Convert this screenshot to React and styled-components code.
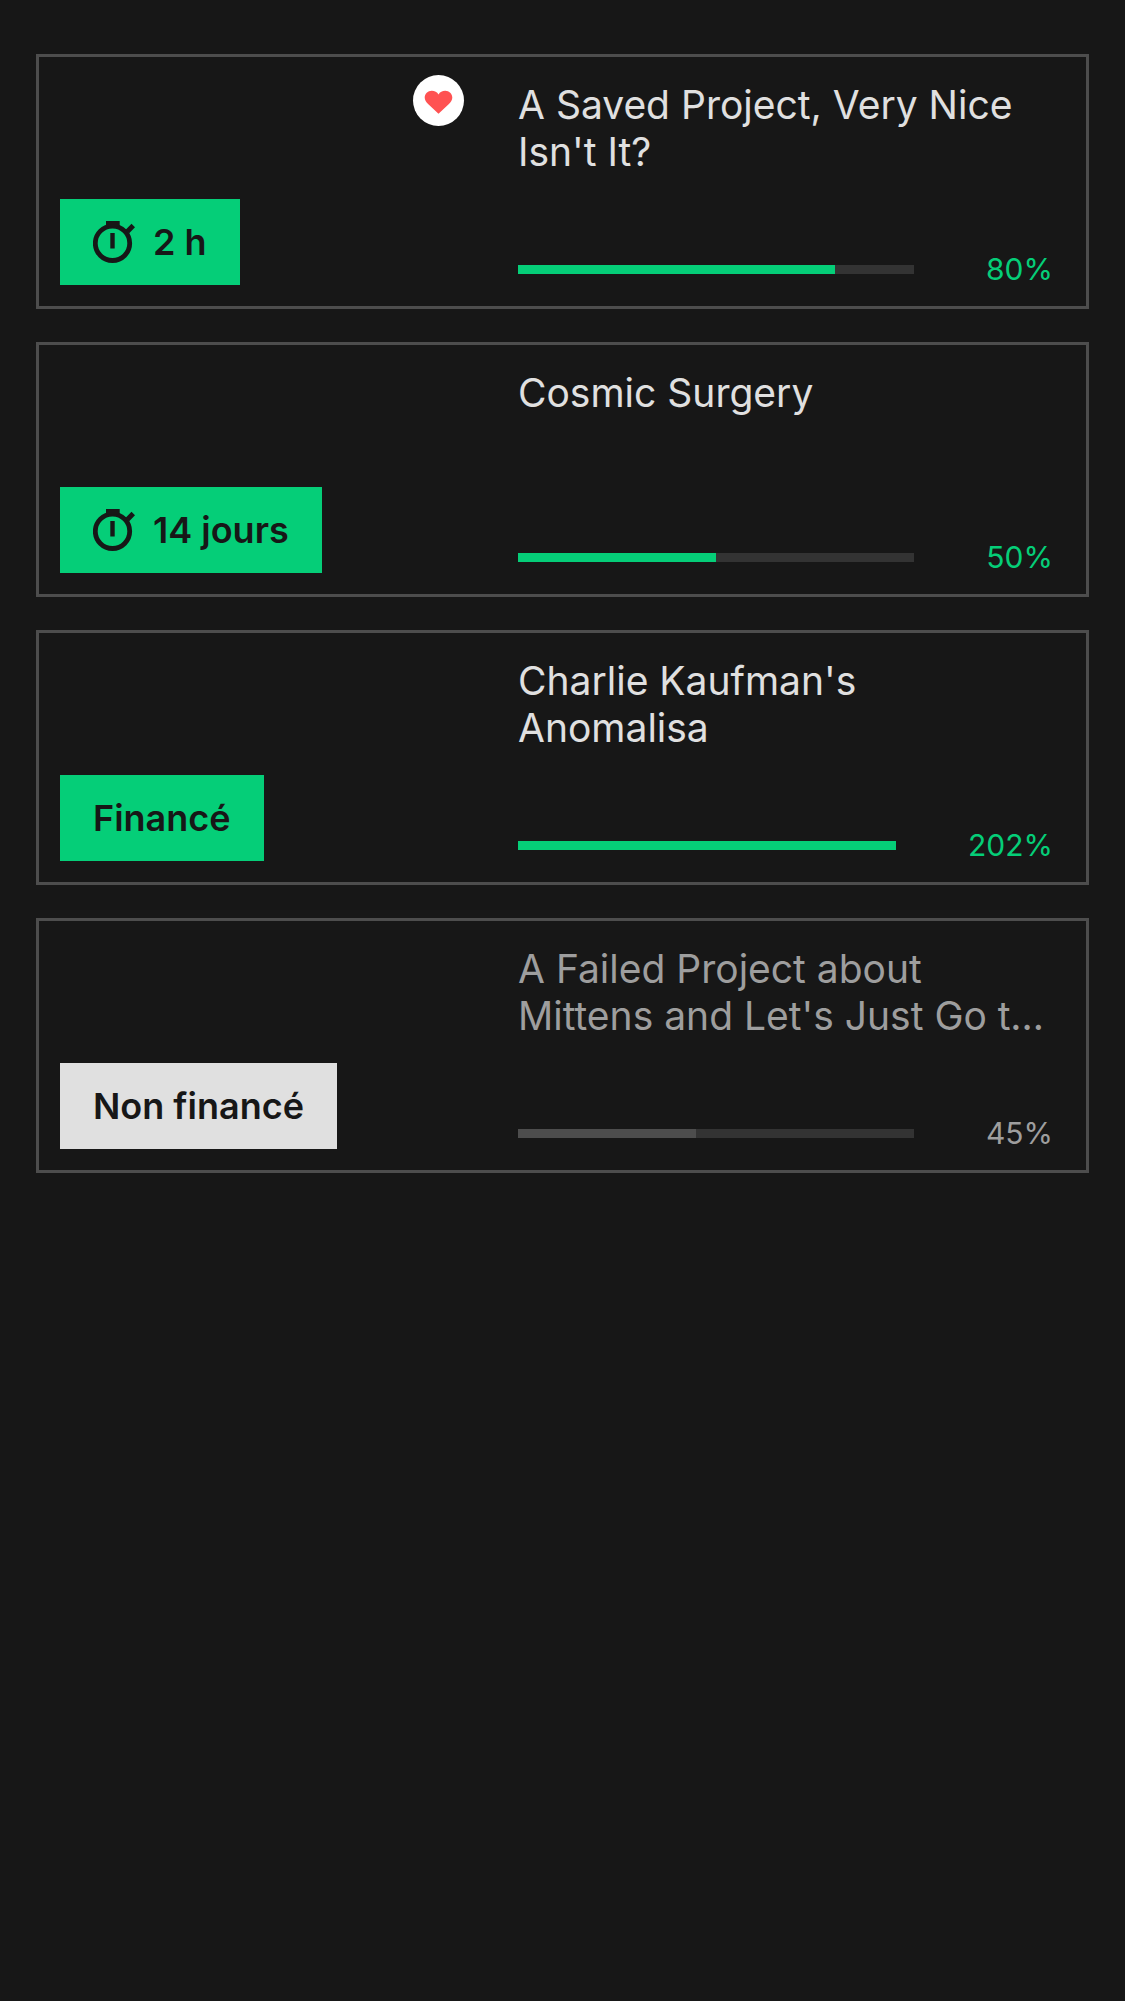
import React from "react";
import styled, { createGlobalStyle } from "styled-components";

const color = {
  page: "#171717",
  border: "#4d4d4d",
  track: "#333333",
  green: "#05ce78",
  light: "#e0e0e0",
  muted: "#9e9e9e",
  white: "#ffffff",
  heart: "#ff5252",
};

const GlobalStyle = createGlobalStyle`
  *, *::before, *::after { box-sizing: border-box; }
  body {
    margin: 0;
    background: ${color.page};
    color: ${color.light};
    font-family: Inter, "Liberation Sans", sans-serif;
  }
`;

const ProjectList = styled.ul`
  display: flex;
  flex-direction: column;
  gap: 33px;
  margin: 0;
  padding: 54px 36px;
  list-style: none;
`;

const Card = styled.li`
  display: grid;
  grid-template-columns: 446fr 601fr;
  min-height: 255px;
  border: 3px solid ${color.border};
`;

const Media = styled.div`
  display: flex;
  flex-direction: column;
  justify-content: space-between;
  padding: 18px 21px 21px;
`;

const SavedMark = styled.span`
  display: flex;
  align-self: flex-end;
  border-radius: 50%;
  background: ${color.white};
`;

const Badge = styled.div`
  display: flex;
  align-items: center;
  align-self: flex-start;
  gap: 18px;
  height: 86px;
  margin-top: auto;
  padding: 0 33px;
  background: ${(p) => (p.$failed ? color.light : color.green)};
  color: ${color.page};
  font-size: 36px;
  font-weight: 600;
  line-height: 44px;
  white-space: nowrap;
`;

const Details = styled.div`
  display: flex;
  flex-direction: column;
  justify-content: space-between;
  min-width: 0;
  padding: 24px 33px 18px;
`;

const Title = styled.h2`
  display: -webkit-box;
  -webkit-box-orient: vertical;
  -webkit-line-clamp: 2;
  overflow: hidden;
  margin: 0;
  color: ${(p) => (p.$failed ? color.muted : color.light)};
  font-size: 39px;
  font-weight: 400;
  line-height: 47px;
`;

const Funding = styled.div`
  display: flex;
  align-items: center;
  gap: 72px;
`;

const Track = styled.div`
  flex: 1;
  height: 9px;
  background: ${color.track};
`;

const Fill = styled.div`
  height: 100%;
  background: ${(p) => (p.$failed ? color.border : color.green)};
`;

const Percent = styled.span`
  color: ${(p) => (p.$failed ? color.muted : color.green)};
  font-size: 30px;
  line-height: 37px;
`;

function HeartIcon() {
  return (
    <svg width="51" height="51" viewBox="0 0 51 51" role="img" aria-label="Saved">
      <path
        fill={color.heart}
        d="M25.5 38.7 L15.6 29.6 C13 27.1 11.7 25.2 11.7 22.6 C11.7 18.6 14.8 15.7 18.8 15.7 C21.6 15.7 24.1 17 25.5 19.4 C26.9 17 29.4 15.7 32.2 15.7 C36.2 15.7 39.3 18.6 39.3 22.6 C39.3 25.2 38 27.1 35.4 29.6 Z"
      />
    </svg>
  );
}

function StopwatchIcon() {
  return (
    <svg width="42" height="42" viewBox="0 0 42 42" aria-hidden="true">
      <circle cx="19.5" cy="22.3" r="17.2" fill="none" stroke="currentColor" strokeWidth="4.8" />
      <path fill="currentColor" d="M13 0 H26.7 V5.5 H13 Z M17.3 12 H21.7 V27.4 H17.3 Z M38.5 2.8 L42 6.3 L36.2 12.2 L32.4 8.9 Z" />
    </svg>
  );
}

const projects = [
  { title: "A Saved Project, Very Nice Isn't It?", badge: "2 h", live: true, saved: true, percent: 80 },
  { title: "Cosmic Surgery", badge: "14 jours", live: true, percent: 50 },
  { title: "Charlie Kaufman's Anomalisa", badge: "Financé", percent: 202 },
  {
    title: "A Failed Project about Mittens and Let's Just Go to the Moon",
    badge: "Non financé",
    failed: true,
    percent: 45,
  },
];

function ProjectCard({ project }) {
  const { title, badge, live, saved, failed, percent } = project;
  return (
    <Card>
      <Media>
        {saved && (
          <SavedMark>
            <HeartIcon />
          </SavedMark>
        )}
        <Badge $failed={failed}>
          {live && <StopwatchIcon />}
          <span>{badge}</span>
        </Badge>
      </Media>
      <Details>
        <Title $failed={failed}>{title}</Title>
        <Funding>
          <Track>
            <Fill $failed={failed} style={{ width: `${Math.min(percent, 100)}%` }} />
          </Track>
          <Percent $failed={failed}>{percent}%</Percent>
        </Funding>
      </Details>
    </Card>
  );
}

export default function App() {
  return (
    <>
      <GlobalStyle />
      <main>
        <ProjectList>
          {projects.map((project) => (
            <ProjectCard key={project.title} project={project} />
          ))}
        </ProjectList>
      </main>
    </>
  );
}
